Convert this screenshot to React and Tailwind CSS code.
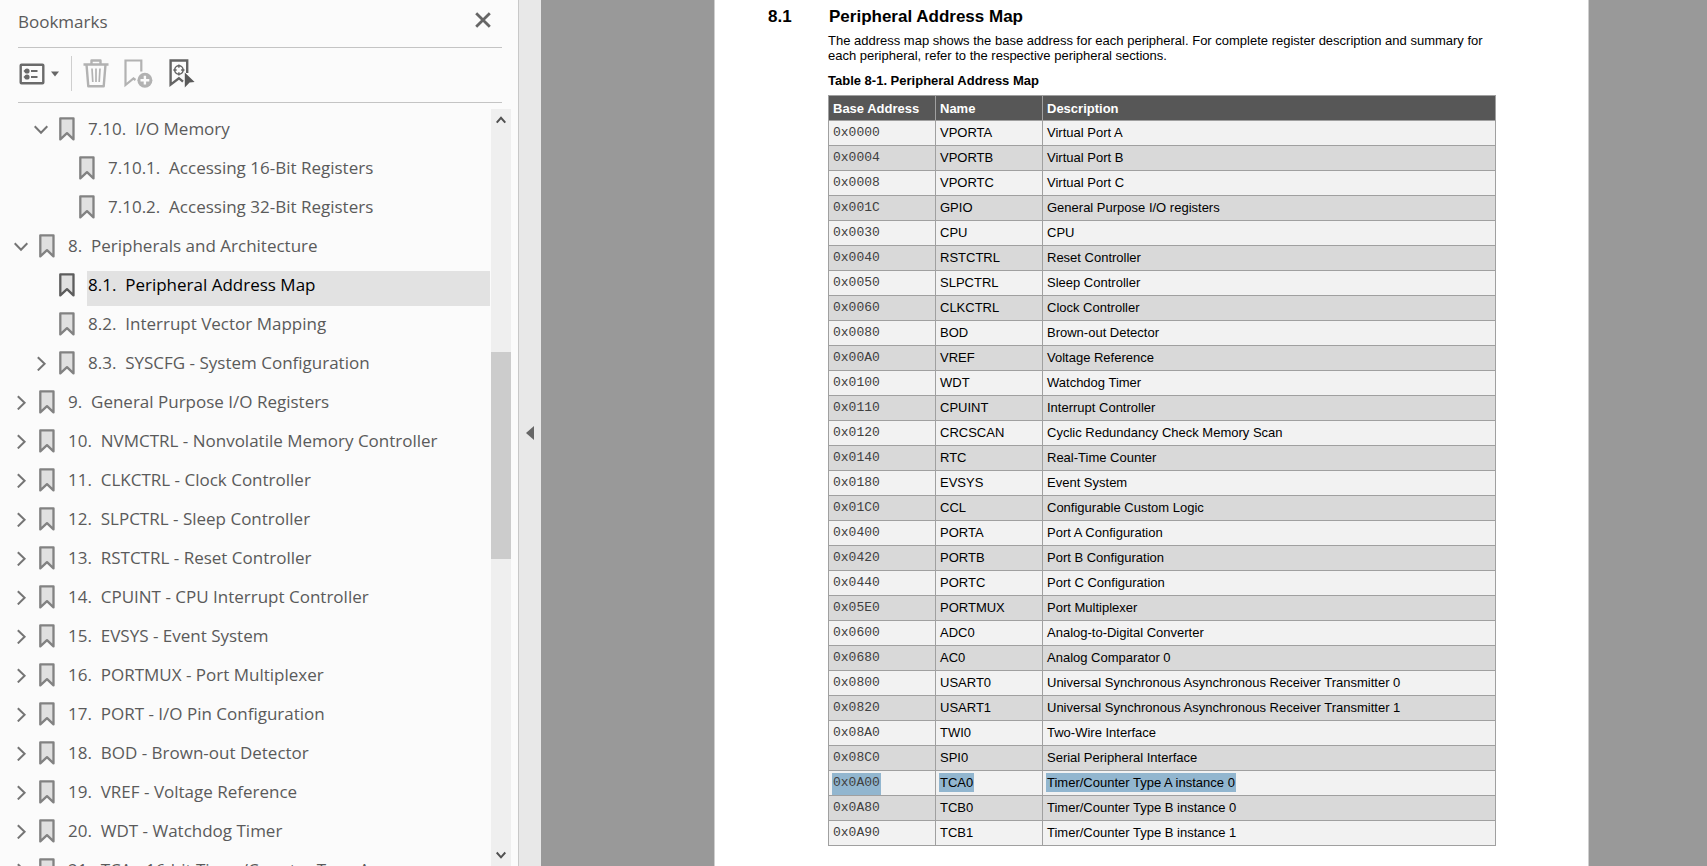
const bookmarks = [
  { level: 1, state: "open", number: "7.10.", title: "I/O Memory" },
  { level: 2, number: "7.10.1.", title: "Accessing 16-Bit Registers" },
  { level: 2, number: "7.10.2.", title: "Accessing 32-Bit Registers" },
  { level: 0, state: "open", number: "8.", title: "Peripherals and Architecture" },
  { level: 1, number: "8.1.", title: "Peripheral Address Map", selected: true },
  { level: 1, number: "8.2.", title: "Interrupt Vector Mapping" },
  { level: 1, state: "closed", number: "8.3.", title: "SYSCFG - System Configuration" },
  { level: 0, state: "closed", number: "9.", title: "General Purpose I/O Registers" },
  { level: 0, state: "closed", number: "10.", title: "NVMCTRL - Nonvolatile Memory Controller" },
  { level: 0, state: "closed", number: "11.", title: "CLKCTRL - Clock Controller" },
  { level: 0, state: "closed", number: "12.", title: "SLPCTRL - Sleep Controller" },
  { level: 0, state: "closed", number: "13.", title: "RSTCTRL - Reset Controller" },
  { level: 0, state: "closed", number: "14.", title: "CPUINT - CPU Interrupt Controller" },
  { level: 0, state: "closed", number: "15.", title: "EVSYS - Event System" },
  { level: 0, state: "closed", number: "16.", title: "PORTMUX - Port Multiplexer" },
  { level: 0, state: "closed", number: "17.", title: "PORT - I/O Pin Configuration" },
  { level: 0, state: "closed", number: "18.", title: "BOD - Brown-out Detector" },
  { level: 0, state: "closed", number: "19.", title: "VREF - Voltage Reference" },
  { level: 0, state: "closed", number: "20.", title: "WDT - Watchdog Timer" },
  { level: 0, state: "closed", number: "21.", title: "TCA - 16-bit Timer/Counter Type A" },
];

const peripherals = [
  ["0x0000", "VPORTA", "Virtual Port A"],
  ["0x0004", "VPORTB", "Virtual Port B"],
  ["0x0008", "VPORTC", "Virtual Port C"],
  ["0x001C", "GPIO", "General Purpose I/O registers"],
  ["0x0030", "CPU", "CPU"],
  ["0x0040", "RSTCTRL", "Reset Controller"],
  ["0x0050", "SLPCTRL", "Sleep Controller"],
  ["0x0060", "CLKCTRL", "Clock Controller"],
  ["0x0080", "BOD", "Brown-out Detector"],
  ["0x00A0", "VREF", "Voltage Reference"],
  ["0x0100", "WDT", "Watchdog Timer"],
  ["0x0110", "CPUINT", "Interrupt Controller"],
  ["0x0120", "CRCSCAN", "Cyclic Redundancy Check Memory Scan"],
  ["0x0140", "RTC", "Real-Time Counter"],
  ["0x0180", "EVSYS", "Event System"],
  ["0x01C0", "CCL", "Configurable Custom Logic"],
  ["0x0400", "PORTA", "Port A Configuration"],
  ["0x0420", "PORTB", "Port B Configuration"],
  ["0x0440", "PORTC", "Port C Configuration"],
  ["0x05E0", "PORTMUX", "Port Multiplexer"],
  ["0x0600", "ADC0", "Analog-to-Digital Converter"],
  ["0x0680", "AC0", "Analog Comparator 0"],
  ["0x0800", "USART0", "Universal Synchronous Asynchronous Receiver Transmitter 0"],
  ["0x0820", "USART1", "Universal Synchronous Asynchronous Receiver Transmitter 1"],
  ["0x08A0", "TWI0", "Two-Wire Interface"],
  ["0x08C0", "SPI0", "Serial Peripheral Interface"],
  ["0x0A00", "TCA0", "Timer/Counter Type A instance 0"],
  ["0x0A80", "TCB0", "Timer/Counter Type B instance 0"],
  ["0x0A90", "TCB1", "Timer/Counter Type B instance 1"],
];

const highlightedAddress = "0x0A00";

const indents = ["pl-[14px]", "pl-[34px]", "pl-[54px]"];

function Chevron({ open }) {
  return (
    <svg width="15" height="15" viewBox="0 0 15 15" fill="none" stroke="#757575" strokeWidth="2">
      <path d={open ? "M0.7 4.3L7 10.7L13.3 4.3" : "M3.8 1.2L10.6 7.8L3.8 14.4"} />
    </svg>
  );
}

function BookmarkIcon({ selected }) {
  return (
    <svg
      width="16"
      height="24"
      viewBox="0 0 16 24"
      fill="#e0e0e0"
      stroke={selected ? "#5c5c5c" : "#828282"}
      strokeWidth="2.3"
      strokeLinejoin="round"
      className="shrink-0"
    >
      <path d="M1.3 1.3H14.5V22.4L8 16.2L1.3 22.4Z" />
    </svg>
  );
}

function BookmarkRow({ item }) {
  return (
    <li className={`flex h-[39px] items-start ${indents[item.level]}`}>
      <span className="flex h-7 w-[25px] shrink-0 items-center">
        {item.state && (
          <button
            type="button"
            aria-label={`${item.state === "open" ? "Collapse" : "Expand"} ${item.title}`}
          >
            <Chevron open={item.state === "open"} />
          </button>
        )}
      </span>
      <span className="pt-0.5">
        <BookmarkIcon selected={item.selected} />
      </span>
      <a
        href="#page"
        className={`ml-3 h-[35px] min-w-0 flex-1 truncate whitespace-pre pl-px leading-7 ${
          item.selected ? "bg-[#e2e2e2] text-black" : "text-[#5a5a5a]"
        }`}
      >
        {item.number + "  " + item.title}
      </a>
    </li>
  );
}

function Toolbar() {
  return (
    <div className="flex h-14 items-center border-y border-[#c4c4c4] pb-[3px]">
      <button type="button" aria-label="Options" className="ml-px flex items-center gap-1.5">
        <svg width="26" height="22" viewBox="0 0 26 22" fill="none" stroke="#6a6a6a" strokeWidth="2.4">
          <rect x="1.7" y="1.7" width="22.6" height="18.6" rx="0.8" />
          <path d="M12 8H18.5M12 14H18.5" strokeWidth="2" />
          <circle cx="8" cy="8" r="2.6" fill="#6a6a6a" stroke="none" />
          <circle cx="8" cy="14" r="2.6" fill="#6a6a6a" stroke="none" />
          <path d="M4.8 8H9M4.8 14H9" strokeWidth="1.4" />
        </svg>
        <svg width="8" height="6" viewBox="0 0 8 6" fill="#666">
          <path d="M0 0.5H8L4 5.5Z" />
        </svg>
      </button>
      <span className="ml-3 h-[35px] w-px bg-[#cfcfcf]" />
      <button type="button" aria-label="Delete bookmark" className="ml-[11px]">
        <svg width="26" height="29" viewBox="0 0 26 29" fill="none" stroke="#b2b2b2" strokeWidth="2.4">
          <path d="M0.5 5.5H25.5M8.5 5V1.5H17.5V5M3.5 5.5L5.3 27.3H20.7L22.5 5.5" strokeLinejoin="round" />
          <path d="M9 9.5L9.8 23M13 9.5V23M17 9.5L16.2 23" strokeWidth="1.7" />
        </svg>
      </button>
      <button type="button" aria-label="Add bookmark" className="ml-[15px]">
        <svg width="29" height="29" viewBox="0 0 29 29" fill="none" stroke="#b2b2b2" strokeWidth="2.2">
          <path d="M17.3 12.5V1.5H1.5V26L9.5 19.5L11.5 21" />
          <circle cx="20.9" cy="21.2" r="7.5" fill="#b2b2b2" stroke="none" />
          <path d="M20.9 16.8V25.6M16.5 21.2H25.3" stroke="#fbfbfb" strokeWidth="2.4" />
        </svg>
      </button>
      <button type="button" aria-label="Locate current bookmark" className="ml-4">
        <svg width="26" height="29" viewBox="0 0 26 29" fill="none" stroke="#646464" strokeWidth="2.4">
          <path d="M18.2 14V1.5H1.6V25.6L9.9 19.2L14 22.6" />
          <circle cx="9.9" cy="11" r="4.2" strokeWidth="1.5" />
          <path d="M9.9 5.4V8.8M9.9 13.2V16.6M4.3 11H7.7M12.1 11H15.5" strokeWidth="1.4" />
          <path d="M15.8 13.5L25.6 23L20.6 23.6L15.8 28.4Z" fill="#5a5a5a" stroke="none" />
        </svg>
      </button>
    </div>
  );
}

function ScrollTrack() {
  return (
    <div className="mr-[7px] flex w-5 flex-col items-center bg-[#efefef]" aria-hidden="true">
      <svg width="10" height="22" viewBox="0 0 10 22" fill="none" stroke="#505050" strokeWidth="2">
        <path d="M0.7 13.6L5 8.8L9.3 13.6" />
      </svg>
      <div className="flex-[221]" />
      <div className="w-full flex-[207] bg-[#cccccc]" />
      <div className="flex-[285]" />
      <svg width="10" height="22" viewBox="0 0 10 22" fill="none" stroke="#505050" strokeWidth="2">
        <path d="M0.7 8.5L5 13.3L9.3 8.5" />
      </svg>
    </div>
  );
}

function Sidebar() {
  return (
    <aside className="flex w-[519px] shrink-0 flex-col border-r border-[#c8c8c8] bg-[#fbfbfb] font-['Open_Sans','Noto_Sans',sans-serif] text-[17px]">
      <div className="ml-[18px] mr-4">
        <header className="flex h-[47px] items-center justify-between pb-1 text-[#5a5a5a]">
          <h2>Bookmarks</h2>
          <button type="button" aria-label="Close bookmarks" className="mr-[11px] pb-[3px]">
            <svg width="16" height="16" viewBox="0 0 16 16" stroke="#666" strokeWidth="2.8">
              <path d="M1.2 1.2L14.8 14.8M14.8 1.2L1.2 14.8" />
            </svg>
          </button>
        </header>
        <Toolbar />
      </div>
      <div className="flex min-h-0 flex-1 pt-[6px]">
        <ul className="min-w-0 flex-1 overflow-hidden pr-px pt-[6px]">
          {bookmarks.map((item) => (
            <BookmarkRow key={item.number} item={item} />
          ))}
        </ul>
        <ScrollTrack />
      </div>
    </aside>
  );
}

function HeaderCell({ children }) {
  return <th className="border border-[#a0a0a0] px-1">{children}</th>;
}

function Cell({ marked, mono, children }) {
  return (
    <td className="border border-[#a0a0a0] px-[3px] pt-0.5 align-top leading-[19px]">
      <span
        className={`block w-fit px-px ${marked ? "bg-[#92b6cf]" : ""} ${
          mono
            ? "h-[22px] font-['Liberation_Mono','Courier_New',monospace] text-[#404040]"
            : "h-[19px]"
        }`}
      >
        {children}
      </span>
    </td>
  );
}

function DocumentPage() {
  return (
    <article
      id="page"
      className="w-[875px] border-x border-[#cfcfcf] bg-white pl-[53px] pr-[92px] pt-1.5 font-['Liberation_Sans',Arial,sans-serif] text-[13px] leading-[15px] text-black"
    >
      <h1 className="flex text-[17px] font-bold leading-[21px]">
        <span className="w-[61px]">8.1</span>
        <span>Peripheral Address Map</span>
      </h1>
      <div className="pl-[60px]">
        <p className="mt-[6px] max-w-[660px]">
          The address map shows the base address for each peripheral. For complete register description
          and summary for each peripheral, refer to the respective peripheral sections.
        </p>
        <table className="mt-[10px] w-full table-fixed border-collapse">
          <caption className="pb-[7px] text-left font-bold">Table 8-1. Peripheral Address Map</caption>
          <colgroup>
            <col className="w-[107px]" />
            <col className="w-[107px]" />
            <col />
          </colgroup>
          <thead className="bg-[#575757] text-left text-white">
            <tr className="h-[25px]">
              <HeaderCell>Base Address</HeaderCell>
              <HeaderCell>Name</HeaderCell>
              <HeaderCell>Description</HeaderCell>
            </tr>
          </thead>
          <tbody>
            {peripherals.map(([address, name, description]) => {
              const marked = address === highlightedAddress;
              return (
                <tr key={address} className="h-[25px] odd:bg-[#f2f2f2] even:bg-[#d9d9d9]">
                  <Cell marked={marked} mono>
                    {address}
                  </Cell>
                  <Cell marked={marked}>{name}</Cell>
                  <Cell marked={marked}>{description}</Cell>
                </tr>
              );
            })}
          </tbody>
        </table>
      </div>
    </article>
  );
}

export default function App() {
  return (
    <div className="flex h-screen overflow-hidden bg-[#999999]">
      <Sidebar />
      <button
        type="button"
        aria-label="Hide bookmarks panel"
        className="flex w-[22px] shrink-0 items-center justify-center bg-[#e8e8e8]"
      >
        <svg width="8" height="14" viewBox="0 0 8 14" fill="#666">
          <path d="M8 0V14L0 7Z" />
        </svg>
      </button>
      <main className="flex min-w-0 flex-1 justify-center overflow-hidden pl-[55px]">
        <DocumentPage />
      </main>
    </div>
  );
}
